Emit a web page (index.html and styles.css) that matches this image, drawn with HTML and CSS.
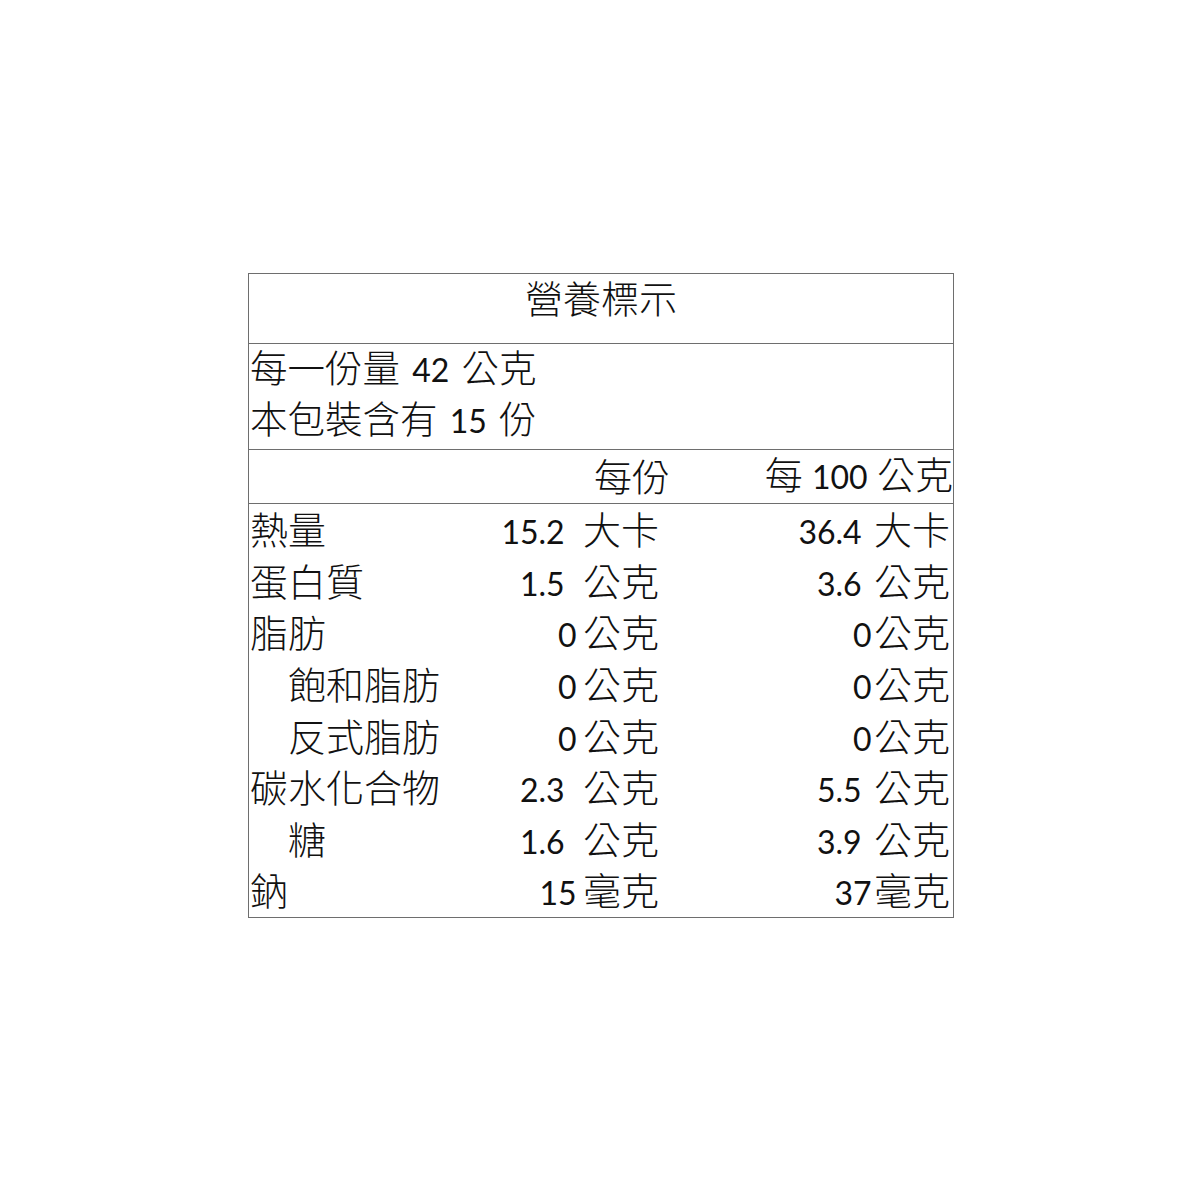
FILE: index.html
```html
<!DOCTYPE html>
<html lang="zh-Hant">
<head>
<meta charset="utf-8">
<title>營養標示</title>
<link rel="stylesheet" href="styles.css">
</head>
<body>
<div class="page">
  <div class="label">
    <div class="title">營養標示</div>
    <div class="serving">
      <div class="line">每一份量 <span class="n">42</span> 公克</div>
      <div class="line">本包裝含有 <span class="n">15</span> 份</div>
    </div>
    <div class="row head">
      <div class="name"></div>
      <div class="v2 hd2">每份</div>
      <div class="v3 hd3">每 <span class="n">100</span> 公克</div>
    </div>
    <div class="rows">
      <div class="row"><div class="name">熱量</div><div class="v2 dec"><span class="n">15.2</span> <span class="u">大卡</span></div><div class="v3 dec"><span class="n">36.4</span> <span class="u">大卡</span></div></div>
      <div class="row"><div class="name">蛋白質</div><div class="v2 dec"><span class="n">1.5</span> <span class="u">公克</span></div><div class="v3 dec"><span class="n">3.6</span> <span class="u">公克</span></div></div>
      <div class="row"><div class="name">脂肪</div><div class="v2 int"><span class="n">0</span> <span class="u">公克</span></div><div class="v3 int"><span class="n">0</span> <span class="u">公克</span></div></div>
      <div class="row"><div class="name sub">飽和脂肪</div><div class="v2 int"><span class="n">0</span> <span class="u">公克</span></div><div class="v3 int"><span class="n">0</span> <span class="u">公克</span></div></div>
      <div class="row"><div class="name sub">反式脂肪</div><div class="v2 int"><span class="n">0</span> <span class="u">公克</span></div><div class="v3 int"><span class="n">0</span> <span class="u">公克</span></div></div>
      <div class="row"><div class="name">碳水化合物</div><div class="v2 dec"><span class="n">2.3</span> <span class="u">公克</span></div><div class="v3 dec"><span class="n">5.5</span> <span class="u">公克</span></div></div>
      <div class="row"><div class="name sub">糖</div><div class="v2 dec"><span class="n">1.6</span> <span class="u">公克</span></div><div class="v3 dec"><span class="n">3.9</span> <span class="u">公克</span></div></div>
      <div class="row"><div class="name">鈉</div><div class="v2 int"><span class="n">15</span> <span class="u">毫克</span></div><div class="v3 int"><span class="n">37</span> <span class="u">毫克</span></div></div>
    </div>
  </div>
</div>
</body>
</html>
```

FILE: styles.css
```css
* {
  box-sizing: border-box;
}

html, body {
  margin: 0;
  padding: 0;
  background: #ffffff;
}

body {
  font-family: "Lato", "Noto Sans CJK TC", sans-serif;
  font-size: 38px;
  font-weight: 300;
  color: #111111;
}

.page {
  padding: 273px 0 0 248px;
}

.label {
  width: 706px;
  border: 1px solid #6e6e6e;
}

.title {
  height: 70px;
  border-bottom: 1px solid #6e6e6e;
  text-align: center;
  font-family: "Noto Sans CJK TC", sans-serif;
  line-height: 46px;
}

.serving {
  height: 106px;
  border-bottom: 1px solid #6e6e6e;
  padding-left: 1px;
  font-size: 37.5px;
}

.serving .line {
  height: 51px;
  line-height: 47px;
  white-space: nowrap;
}

.serving .n {
  margin: 0 2px;
}

.n {
  font-family: "Lato", sans-serif;
  font-size: 32px;
  font-weight: 400;
}

.u {
  font-family: "Noto Sans CJK TC", sans-serif;
}

.row {
  display: grid;
  grid-template-columns: 220px 189px 1fr;
  padding: 0 3px 0 1px;
  height: 51.625px;
  line-height: 48px;
  white-space: nowrap;
}

.row.head {
  height: 54px;
  line-height: 49px;
  border-bottom: 1px solid #6e6e6e;
}

.name {
  font-family: "Noto Sans CJK TC", sans-serif;
}

.name.sub {
  padding-left: 38px;
}

.v2,
.v3 {
  text-align: right;
}

.hd2 {
  margin-right: -11px;
  font-family: "Noto Sans CJK TC", sans-serif;
}

.hd3 {
  margin-right: -3px;
}

.hd3 .n {
  margin: 0 -1px;
}

.v2.dec .u {
  margin-left: 8px;
}

.v2.int .u {
  margin-left: -4px;
}

.v3.dec .u {
  margin-left: 2px;
}

.v3.int .u {
  margin-left: -8px;
}
```
